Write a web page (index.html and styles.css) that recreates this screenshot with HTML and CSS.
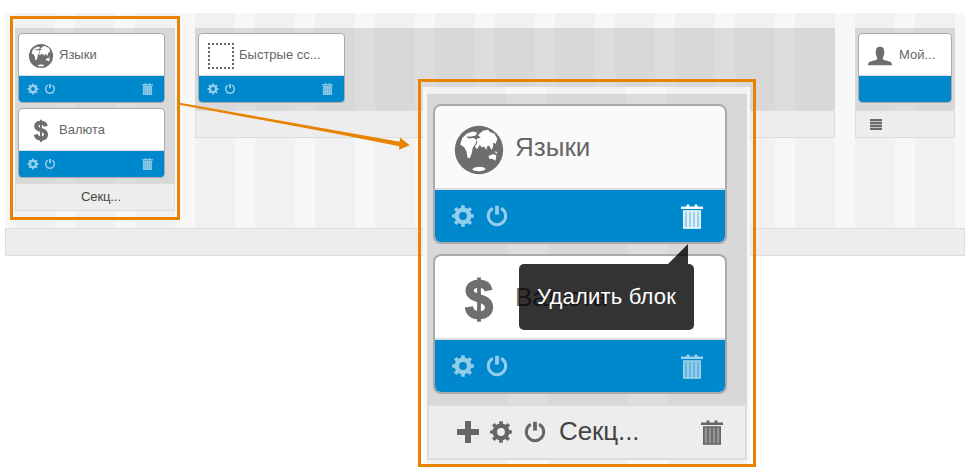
FILE: index.html
```html
<!DOCTYPE html>
<html lang="ru">
<head>
<meta charset="utf-8">
<title>Блоки</title>
<link rel="stylesheet" href="styles.css">
</head>
<body>
<svg class="defs" aria-hidden="true">
  <symbol id="globe" viewBox="0 0 26 26">
    <circle cx="13" cy="13" r="12.1" fill="currentColor"/>
    <path fill="#fff" d="M3.6 10.2 4.6 7 7 4.7 10 3.8 12 4.3 11.4 5.8 9 6.3 6.6 6.4 7.8 7.3 10.4 7 11.8 8.1 11.3 9.7 9.8 12 9.5 14.3 8.4 17.1 7.3 16.9 6.7 13.6 5.6 11.6Z"/>
    <path fill="#fff" d="M12.4 5.6 15 3.4 17.6 2.9 18.4 4 20.7 4.7 22.2 7.5 21.2 10 20 9.3 20.1 11.3 19.2 13 18 10.8 16.9 11.4 16.8 13 15.6 11.4 14.3 11.6 13.4 10.4 12 12.6 11 11.2 12.2 9.2 11.7 7.5 13.9 6.7Z"/>
    <path fill="#fff" d="M17.8 16 20.1 15 21.7 15.8 21.2 18.4 19.7 17.4 18.2 17.5ZM20.5 13.7l1.4.2.3 1.1ZM9.6 22.8c1-1.8 5.7-1.9 6.8-.2-1.5 1.2-5.2 1.4-6.8.2Z"/>
  </symbol>
  <symbol id="dollar" viewBox="0 0 26 26">
    <path fill="none" stroke="currentColor" stroke-width="4.1" d="M17.8 8.3C17.3 5.8 15.4 4.8 13 4.8 10.1 4.8 8.3 6.1 8.3 8.3 8.3 10.8 10.7 11.500 13 12.100 15.800 12.800 18 13.800 18 16.600 18 19.100 16.100 20.600 13.200 20.600 9.900 20.600 8.300 19.100 7.900 16.400"/>
    <path stroke="currentColor" stroke-width="1.900" d="M13 1.800v22.100"/>
  </symbol>
  <symbol id="user" viewBox="0 0 26 26">
    <path fill="currentColor" d="M0 22.300c0-3 1.600-3.500 4.300-4.200 2.600-.7 5-1.200 5-2.600 0-.8-.3-1.300-.7-2-.7-1.200-.9-2.500-.9-4.500 0-3.500 1.500-5.300 4.300-5.300s4.300 1.800 4.300 5.300c0 2-.2 3.300-.9 4.500-.4.700-.7 1.200-.7 2 0 1.400 2.400 1.900 5 2.600 2.700.7 4.300 1.200 4.300 4.200Z"/>
  </symbol>
  <symbol id="gear" viewBox="0 0 12 12">
    <circle cx="6" cy="6" r="3.100" fill="none" stroke="currentColor" stroke-width="2.300"/>
    <path stroke="currentColor" stroke-width="1.800" d="M6 .6v1.800M6 9.600v1.800M.6 6h1.800M9.600 6h1.800M2.100 2.100l1.400 1.400M8.500 8.500l1.400 1.400M2.100 9.900l1.400-1.400M8.500 3.500l1.400-1.400"/>
  </symbol>
  <symbol id="power" viewBox="0 0 12 12">
    <path fill="none" stroke="currentColor" stroke-width="1.500" d="M3.900 2.200a4.350 4.350 0 1 0 4.200 0"/>
    <path stroke="currentColor" stroke-width="1.900" d="M6 .9v4.400"/>
  </symbol>
  <symbol id="trash" viewBox="0 0 11 12.500">
    <path fill="currentColor" d="M0 1.200h2.800V.2h1.400v1h2.600v-1h1.400v1H11v1.300H0Z"/>
    <path fill="currentColor" opacity=".65" d="M1.200 3.400h8.600v8.800H1.200z"/>
    <path fill="none" stroke="currentColor" stroke-width=".8" d="M1.400 3.500h8.200v8.500H1.400zM3.500 3.500V12M5.500 3.500V12M7.500 3.500V12"/>
  </symbol>
  <symbol id="plus" viewBox="0 0 12 12">
    <path fill="currentColor" d="M4.500.5h3v4h4v3h-4v4h-3v-4h-4v-3h4z"/>
  </symbol>
</svg>

<main class="page">
  <div class="container">
    <div class="sections">
      <section class="section section--narrow">
        <div class="section__body">
          <article class="block">
            <div class="block__head"><svg class="block__icon"><use href="#globe"/></svg>Языки</div>
            <div class="block__tools"><svg class="icon"><use href="#gear"/></svg><svg class="icon"><use href="#power"/></svg><svg class="trash"><use href="#trash"/></svg></div>
          </article>
          <article class="block">
            <div class="block__head"><svg class="block__icon"><use href="#dollar"/></svg>Валюта</div>
            <div class="block__tools"><svg class="icon"><use href="#gear"/></svg><svg class="icon"><use href="#power"/></svg><svg class="trash"><use href="#trash"/></svg></div>
          </article>
        </div>
        <footer class="section__foot section__foot--title">Секц...</footer>
      </section>
      <section class="section section--wide">
        <div class="section__body">
          <article class="block">
            <div class="block__head"><svg class="block__icon" viewBox="0 0 26 26"><path class="dotted" d="M0 1h26M0 25h26M1 0v26M25 0v26"/></svg>Быстрые сс...</div>
            <div class="block__tools"><svg class="icon"><use href="#gear"/></svg><svg class="icon"><use href="#power"/></svg><svg class="trash"><use href="#trash"/></svg></div>
          </article>
        </div>
        <footer class="section__foot"></footer>
      </section>
      <section class="section section--small">
        <div class="section__body">
          <article class="block block--small">
            <div class="block__head"><svg class="block__icon"><use href="#user"/></svg>Мой...</div>
            <div class="block__tools"></div>
          </article>
        </div>
        <footer class="section__foot section__foot--menu"><span class="lines"></span></footer>
      </section>
    </div>
    <div class="container__foot"></div>
  </div>
</main>

<div class="highlight"></div>
<svg class="arrow" viewBox="0 0 240 60"><path d="M3 2.500 224.500 41.700 225.300 37.700 234.700 45.300 224 49.700 224.400 46.300 160 33.500 3 4.500Z"/></svg>

<div class="detail">
  <div class="detail__view">
    <section class="section section--narrow">
      <div class="section__body">
        <article class="block block--hover">
          <div class="block__head"><svg class="block__icon"><use href="#globe"/></svg>Языки</div>
          <div class="block__tools"><svg class="icon"><use href="#gear"/></svg><svg class="icon"><use href="#power"/></svg><svg class="trash trash--active"><use href="#trash"/></svg></div>
        </article>
        <article class="block">
          <div class="block__head"><svg class="block__icon"><use href="#dollar"/></svg>Валюта</div>
          <div class="block__tools"><svg class="icon"><use href="#gear"/></svg><svg class="icon"><use href="#power"/></svg><svg class="trash"><use href="#trash"/></svg></div>
        </article>
      </div>
      <footer class="section__foot section__foot--tools"><svg class="icon plus"><use href="#plus"/></svg><svg class="icon"><use href="#gear"/></svg><svg class="icon"><use href="#power"/></svg><span class="name">Секц...</span><svg class="trash"><use href="#trash"/></svg></footer>
    </section>
  </div>
</div>
<div class="frame"></div>
<div class="tooltip">Удалить блок</div>
</body>
</html>
```
FILE: styles.css
```css
* { box-sizing: border-box; }

body {
  margin: 0;
  width: 970px;
  height: 476px;
  overflow: hidden;
  position: relative;
  background: #fff;
  font: 13px/16px "Liberation Sans", Arial, sans-serif;
}

.defs { position: absolute; width: 0; height: 0; }
svg { display: block; flex: none; }

.page { padding: 13px 5px 0; }

.container,
.detail__view {
  background: repeating-linear-gradient(90deg, #f1f1f1 0 40px, #f7f7f7 40px 60px) 10px 0;
}

.container { height: 243px; display: flex; flex-direction: column; }
.sections { flex: 1; display: flex; align-items: flex-start; gap: 20px; padding: 15px 10px 0; }
.container__foot { height: 28px; border: 1px solid #ddd; background: #ededed; }

.section--narrow { width: 160px; }
.section--wide { width: 640px; }
.section--small { width: 100px; }

.section__body {
  display: flex;
  flex-direction: column;
  gap: 5px;
  padding: 5px 3px;
  background: rgba(0, 0, 0, .1);
}
.section--wide .section__body,
.section--small .section__body { padding-bottom: 7px; }

.section__foot {
  display: flex;
  align-items: center;
  height: 28px;
  border: 1px solid #dcdcdc;
  background: #ededed;
  color: #444;
}
.section__foot--title { padding-left: 65px; letter-spacing: -.1px; }
.section__foot--menu { padding-left: 14px; }
.section__foot--tools { padding: 0 11px 0 13.500px; color: #666; }
.section__foot--tools .icon { margin-right: 5px; }
.section__foot--tools .plus { margin-right: 4.500px; }
.section__foot--tools .trash { margin-left: auto; opacity: 1; }
.name { color: #444; margin: -1px 0 0 1px; letter-spacing: -.05px; }

.lines {
  width: 12px;
  height: 11px;
  background: repeating-linear-gradient(#6a6a6a 0 2px, #c4c4c4 2px 3px);
}

.block {
  width: 147px;
  height: 70px;
  border: 1px solid #aaa;
  border-radius: 4px;
  overflow: hidden;
  background: #fff;
}
.block--small { width: 94px; }
.block--hover { background: #fafafa; }

.block__head {
  display: flex;
  align-items: center;
  gap: 5px;
  height: 42px;
  padding: 0 9px;
  border-bottom: 1px solid #ddd;
  color: #666;
  white-space: nowrap;
}
.block__icon { width: 26px; height: 26px; color: #6e6e6e; margin-top: 9px; align-self: flex-start; }
.dotted { fill: none; stroke: #666; stroke-width: 2; stroke-dasharray: 2; }

.block__tools {
  display: flex;
  align-items: center;
  gap: 5px;
  height: 26px;
  padding: 0 11px 0 8px;
  background: #0088cc;
  color: #fff;
}
.icon { width: 12px; height: 12px; }
.trash { width: 11px; height: 12.500px; margin-left: auto; }
.block__tools .icon { opacity: .58; }
.block__tools .trash { opacity: .62; }
.block__tools .trash--active { opacity: .95; }

.highlight {
  position: absolute;
  left: 9.500px;
  top: 16px;
  width: 170px;
  height: 204px;
  border: 3px solid #e88300;
}
.arrow { position: absolute; left: 175px; top: 100px; width: 240px; height: 60px; fill: #e88300; }

.detail { position: absolute; left: 423px; top: 87px; width: 327px; height: 379px; }
.detail__view {
  zoom: 2;
  width: 163.500px;
  height: 189.500px;
  padding: 3.500px 0 0 2px;
  background-position: 2px 0;
}

.frame {
  position: absolute;
  left: 418px;
  top: 79px;
  width: 338px;
  height: 388px;
  border: 3px solid #e88300;
}

.tooltip {
  position: absolute;
  left: 519px;
  top: 264px;
  width: 175px;
  height: 66px;
  border-radius: 5px;
  background: rgba(0, 0, 0, .8);
  color: #fff;
  font-size: 22px;
  line-height: 66px;
  letter-spacing: .2px;
  text-align: center;
}
.tooltip::before {
  content: "";
  position: absolute;
  right: 6px;
  top: -20px;
  width: 20px;
  height: 20px;
  background: rgba(0, 0, 0, .8);
  clip-path: polygon(100% 0, 100% 100%, 0 100%);
}
```
